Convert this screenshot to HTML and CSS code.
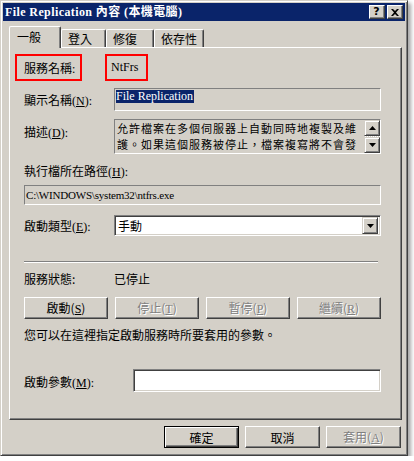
FILE: index.html
```html
<!DOCTYPE html>
<html lang="zh-Hant">
<head>
    <meta charset="UTF-8">
    <title>File Replication 內容 (本機電腦)</title>
    <link rel="stylesheet" href="styles.css">
</head>
<body>
    <div class="window">
        <div class="titlebar">
            <span class="title">File Replication 內容 (本機電腦)</span>
            <div class="caption-buttons">
                <span class="cap-btn help">?</span>
                <span class="cap-btn">
                    <svg width="8" height="7" viewBox="0 0 8 7"><path d="M0 0h2l2 2 2-2h2L5 3.5 8 7H6L4 5 2 7H0l3-3.5z" fill="#000"/></svg>
                </span>
            </div>
        </div>

        <div class="dialog-body">
            <div class="tabs">
                <div class="tab active">一般</div>
                <div class="tab w45">登入</div>
                <div class="tab w48">修復</div>
                <div class="tab w50">依存性</div>
            </div>

            <div class="panel">
                <div class="name-row">
                    <div class="redbox first">服務名稱:</div>
                    <div class="redbox second">NtFrs</div>
                </div>

                <div class="field-row display-row">
                    <label class="label">顯示名稱(<u>N</u>):</label>
                    <div class="static-field tall"><span class="selected">File Replication</span></div>
                </div>

                <div class="field-row desc-row">
                    <label class="label">描述(<u>D</u>):</label>
                    <div class="desc-box">
                        <div class="desc-text">允許檔案在多個伺服器上自動同時地複製及維<br>護。如果這個服務被停止，檔案複寫將不會發</div>
                        <div class="scrollbar">
                            <div class="scroll-btn">
                                <svg width="7" height="4" viewBox="0 0 7 4"><path d="M3.5 0L7 4H0z" fill="#000"/></svg>
                            </div>
                            <div class="scroll-track"></div>
                            <div class="scroll-btn">
                                <svg width="7" height="4" viewBox="0 0 7 4"><path d="M0 0h7L3.5 4z" fill="#000"/></svg>
                            </div>
                        </div>
                    </div>
                </div>

                <div class="path-label">執行檔所在路徑(<u>H</u>):</div>
                <div class="static-field path">C:\WINDOWS\system32\ntfrs.exe</div>

                <div class="field-row start-row">
                    <label class="label">啟動類型(<u>E</u>):</label>
                    <div class="combo">
                        <span class="combo-text">手動</span>
                        <div class="combo-btn">
                            <svg width="7" height="4" viewBox="0 0 7 4"><path d="M0 0h7L3.5 4z" fill="#000"/></svg>
                        </div>
                    </div>
                </div>

                <div class="separator"></div>

                <div class="field-row status-row">
                    <span class="label">服務狀態:</span>
                    <span>已停止</span>
                </div>

                <div class="service-buttons">
                    <button class="btn">啟動(<u>S</u>)</button>
                    <button class="btn" disabled>停止(<u>T</u>)</button>
                    <button class="btn" disabled>暫停(<u>P</u>)</button>
                    <button class="btn" disabled>繼續(<u>R</u>)</button>
                </div>

                <p class="note">您可以在這裡指定啟動服務時所要套用的參數。</p>

                <div class="field-row params-row">
                    <label class="label params-label">啟動參數(<u>M</u>):</label>
                    <div class="edit"></div>
                </div>
            </div>

            <div class="dialog-buttons">
                <button class="btn default">確定</button>
                <button class="btn">取消</button>
                <button class="btn" disabled>套用(<u>A</u>)</button>
            </div>
        </div>
    </div>
</body>
</html>
```

FILE: styles.css
```css
body {
    margin: 0;
    background: #fff;
    font-family: "Liberation Serif", "Noto Sans CJK TC", serif;
    font-size: 12px;
    color: #000;
}

.window {
    width: 408px;
    height: 456px;
    box-sizing: border-box;
    background: #d4d0c8;
    border: 1px solid;
    border-color: #d4d0c8 #404040 #404040 #d4d0c8;
    box-shadow: inset 1px 1px #fff, inset -1px -1px #808080, 3px 3px 4px rgba(0, 0, 0, 0.35);
    padding: 2px;
}

/* title bar */
.titlebar {
    height: 18px;
    background: #0a246a;
    display: flex;
    align-items: center;
    justify-content: space-between;
    padding: 0 2px 0 2px;
}

.title {
    color: #fff;
    font-weight: bold;
    font-size: 12px;
    line-height: 18px;
    letter-spacing: 0.4px;
}

.caption-buttons {
    display: flex;
    gap: 2px;
}

.cap-btn {
    width: 16px;
    height: 14px;
    box-sizing: border-box;
    background: #d4d0c8;
    border: 1px solid;
    border-color: #fff #404040 #404040 #fff;
    box-shadow: inset -1px -1px #808080;
    display: flex;
    align-items: center;
    justify-content: center;
}

.cap-btn.help {
    font-family: "DejaVu Sans", sans-serif;
    font-weight: bold;
    font-size: 11px;
    line-height: 12px;
    padding-right: 1px;
}

/* body */
.dialog-body {
    padding: 6px 3px 0 6px;
}

.tabs {
    display: flex;
    align-items: flex-end;
    height: 21px;
    margin-bottom: -1px;
}

.tab {
    height: 18px;
    box-sizing: border-box;
    margin-bottom: 1px;
    padding-left: 6px;
    line-height: 17px;
    font-family: "Noto Sans CJK TC", sans-serif;
    border-top: 1px solid #fff;
    border-left: 1px solid #fff;
    border-right: 1px solid #404040;
    border-radius: 2px 2px 0 0;
    box-shadow: inset -1px 0 #808080;
}

.tab.active {
    position: relative;
    z-index: 1;
    width: 52px;
    height: 22px;
    margin-bottom: 0;
    padding-left: 7px;
    line-height: 20px;
    background: #d4d0c8;
}

.w45 { width: 45px; }
.w48 { width: 48px; }
.w50 { width: 50px; }

.panel {
    height: 373px;
    box-sizing: border-box;
    border: 1px solid;
    border-color: #fff #404040 #404040 #fff;
    box-shadow: inset -1px -1px #808080;
    padding: 6px 20px 0 14px;
}

.name-row {
    display: flex;
    height: 27px;
    margin-left: -9px;
}

.redbox {
    box-sizing: border-box;
    border: 2px solid #f00;
    display: flex;
    align-items: center;
}

.redbox.first {
    width: 67px;
    padding-left: 7px;
}

.redbox.second {
    width: 43px;
    margin-left: 23px;
    padding-left: 4px;
}

.field-row {
    display: flex;
    align-items: center;
}

.label {
    width: 90px;
    flex-shrink: 0;
}

.display-row {
    margin-top: 7px;
}

.static-field {
    flex: 1;
    box-sizing: border-box;
    border: 1px solid;
    border-color: #808080 #fff #fff #808080;
    padding: 0 1px;
    display: flex;
    align-items: center;
}

.static-field.tall {
    height: 23px;
    align-items: flex-start;
    padding-top: 1px;
}

.selected {
    background: #0a246a;
    color: #fff;
    line-height: 13px;
    padding-right: 1px;
}

.desc-row {
    margin-top: 8px;
    align-items: flex-start;
}

.desc-row .label {
    padding-top: 4px;
}

.desc-box {
    flex: 1;
    height: 35px;
    box-sizing: border-box;
    border: 1px solid;
    border-color: #808080 #fff #fff #808080;
    display: flex;
}

.desc-text {
    flex: 1;
    padding-left: 2px;
    font-family: "Noto Sans CJK TC", sans-serif;
    font-size: 11px;
    letter-spacing: 1px;
    line-height: 16px;
    white-space: nowrap;
}

.scrollbar {
    width: 16px;
    display: flex;
    flex-direction: column;
}

.scroll-btn {
    height: 16px;
    box-sizing: border-box;
    border: 1px solid;
    border-color: #d4d0c8 #404040 #404040 #d4d0c8;
    box-shadow: inset 1px 1px #fff, inset -1px -1px #808080;
    display: flex;
    align-items: center;
    justify-content: center;
}

.scroll-track {
    flex: 1;
    background: repeating-conic-gradient(#fff 0 25%, #d4d0c8 0 50%) 0 0 / 2px 2px;
}

.path-label {
    margin-top: 10px;
    line-height: 16px;
}

.static-field.path {
    margin-top: 5px;
    height: 20px;
    font-size: 11px;
    letter-spacing: -0.2px;
}

.start-row {
    margin-top: 10px;
}

.combo {
    flex: 1;
    height: 21px;
    box-sizing: border-box;
    background: #fff;
    border: 1px solid;
    border-color: #808080 #fff #fff #808080;
    box-shadow: inset 1px 1px #404040, inset -1px -1px #d4d0c8;
    padding: 2px;
    display: flex;
    align-items: center;
}

.combo-text {
    flex: 1;
    font-family: "Noto Sans CJK TC", sans-serif;
    padding-left: 1px;
}

.combo-btn {
    width: 16px;
    height: 17px;
    box-sizing: border-box;
    background: #d4d0c8;
    border: 1px solid;
    border-color: #d4d0c8 #404040 #404040 #d4d0c8;
    box-shadow: inset 1px 1px #fff, inset -1px -1px #808080;
    display: flex;
    align-items: center;
    justify-content: center;
}

.separator {
    margin: 25px 3px 0 0;
    border-top: 1px solid #808080;
    border-bottom: 1px solid #fff;
}

.status-row {
    margin-top: 8px;
    line-height: 16px;
    font-family: "Noto Sans CJK TC", sans-serif;
}

.service-buttons {
    display: flex;
    justify-content: space-between;
    margin-top: 10px;
}

.btn {
    width: 84px;
    height: 22px;
    box-sizing: border-box;
    background: #d4d0c8;
    border: 1px solid;
    border-color: #fff #404040 #404040 #fff;
    box-shadow: inset -1px -1px #808080;
    font-family: "Noto Sans CJK TC", sans-serif;
    font-size: 12px;
    color: #000;
    padding: 0;
}

.btn u {
    font-family: "Liberation Serif", serif;
}

.btn:disabled {
    color: #808080;
    text-shadow: 1px 1px #fff;
}

.note {
    margin: 8px 0 0;
    line-height: 16px;
    font-family: "Noto Sans CJK TC", sans-serif;
}

.params-row {
    margin-top: 26px;
}

.params-label {
    width: 109px;
    align-self: flex-start;
    padding-top: 4px;
}

.edit {
    flex: 1;
    height: 23px;
    box-sizing: border-box;
    background: #fff;
    border: 1px solid;
    border-color: #808080 #fff #fff #808080;
    box-shadow: inset 1px 1px #404040, inset -1px -1px #d4d0c8;
}

.dialog-buttons {
    display: flex;
    justify-content: flex-end;
    gap: 6px;
    margin-top: 6px;
    padding-right: 1px;
}

.dialog-buttons .btn {
    width: 75px;
}

.btn.default {
    border: 1px solid #000;
    box-shadow: inset 1px 1px #fff, inset -1px -1px #404040, inset -2px -2px #808080;
}
```
